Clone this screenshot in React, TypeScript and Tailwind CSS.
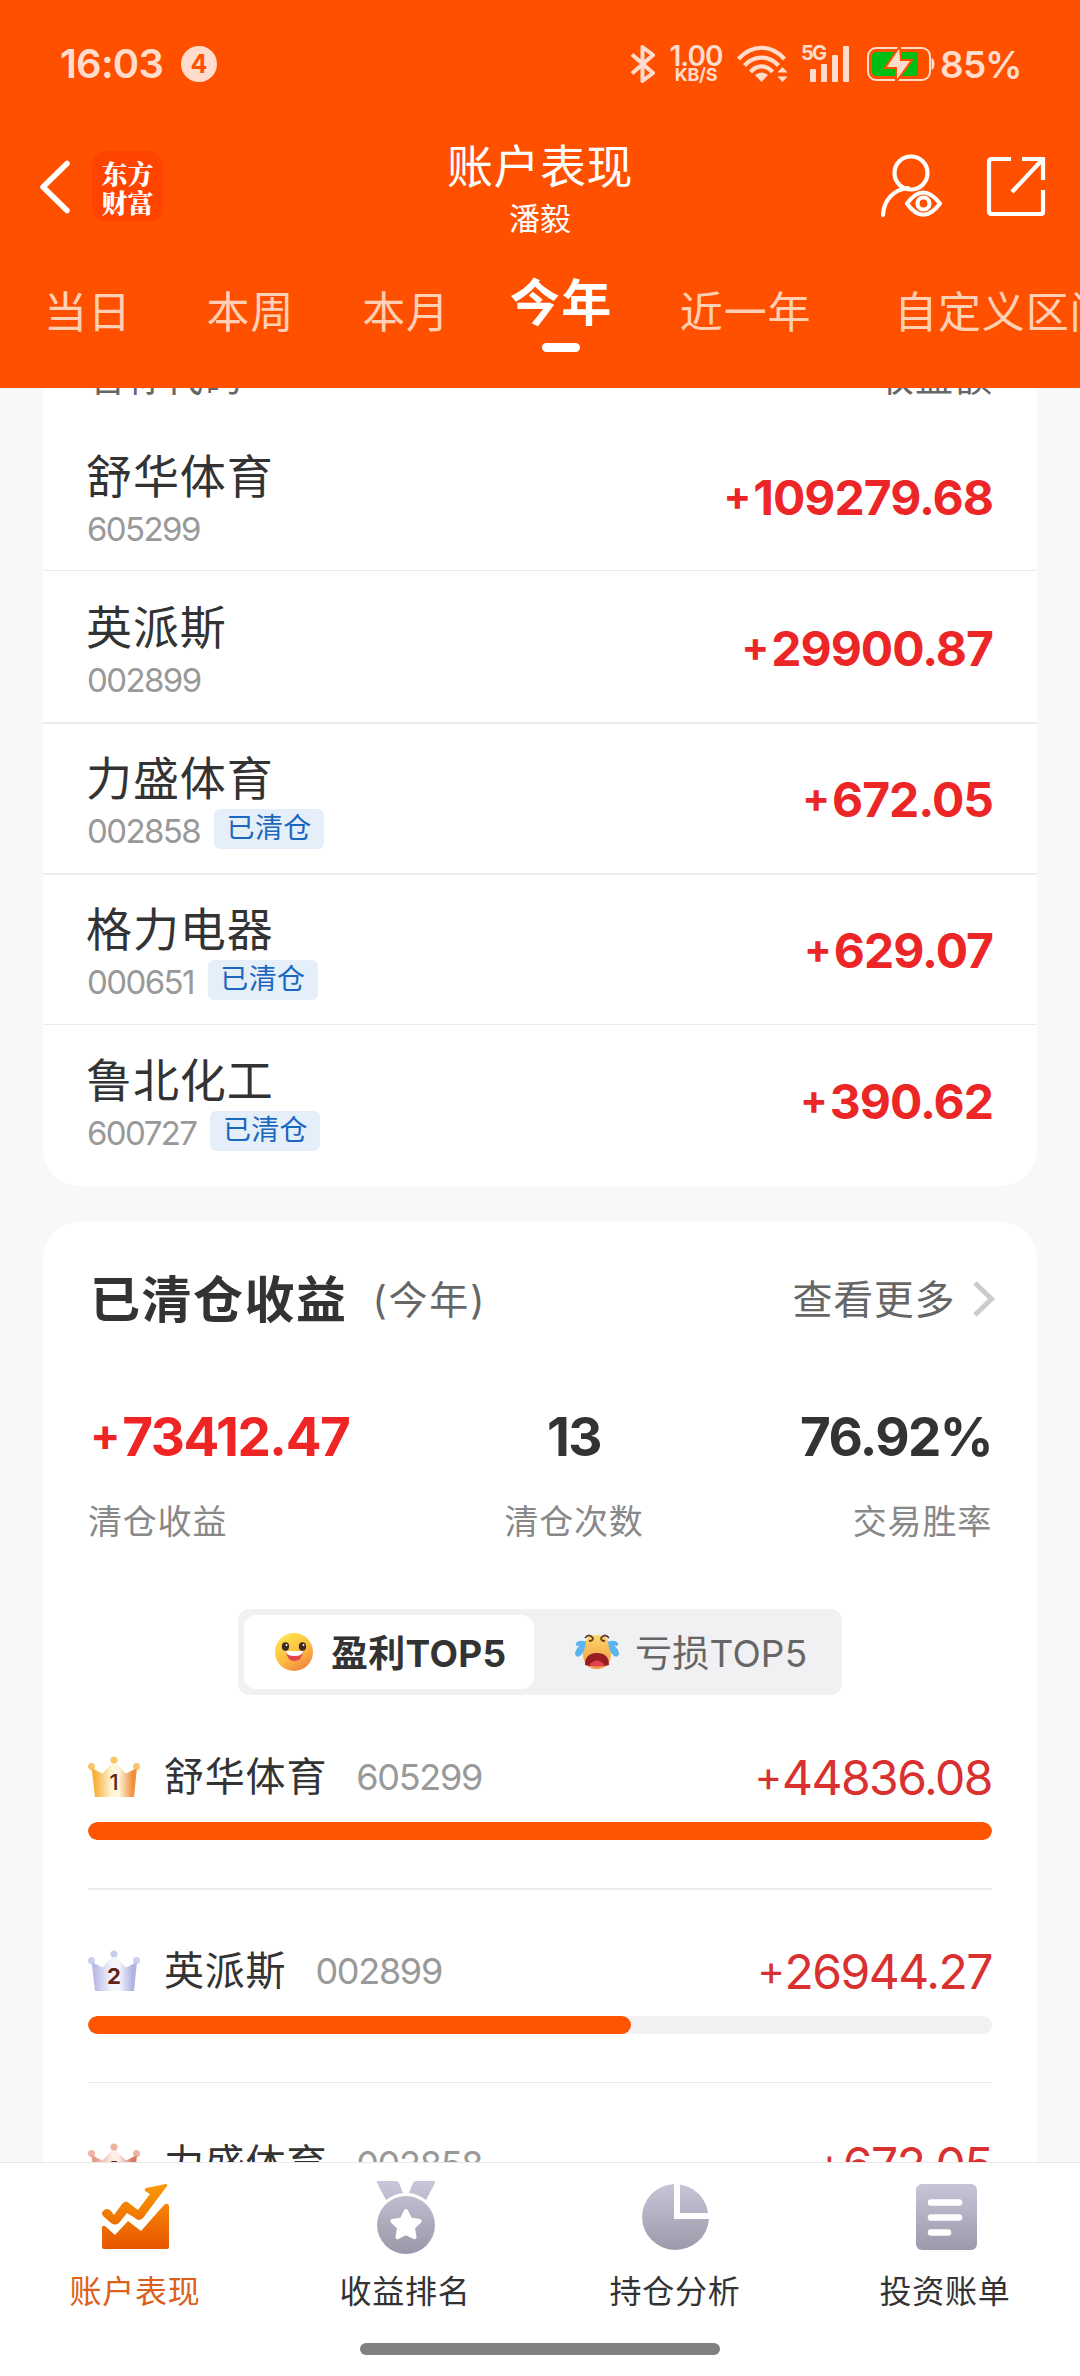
import clsx from 'clsx';

const tabs = [
  { label: '当日', className: 'ml-[44px]' },
  { label: '本周', className: 'ml-[75px]' },
  { label: '本月', className: 'ml-[68px]' },
  { label: '今年', active: true, className: 'ml-[60px]' },
  { label: '近一年', className: 'ml-[67px]' },
  { label: '自定义区间', className: 'ml-[83px]' },
];

const holdings = [
  { name: '舒华体育', code: '605299', amount: '109279.68', cleared: false, row: 'h-[151px] pt-[29px]' },
  { name: '英派斯', code: '002899', amount: '29900.87', cleared: false, row: 'h-[152px] border-t pt-[28px]' },
  { name: '力盛体育', code: '002858', amount: '672.05', cleared: true, row: 'h-[151px] border-t-2 pt-[26px]' },
  { name: '格力电器', code: '000651', amount: '629.07', cleared: true, row: 'h-[151px] border-t-2 pt-[26px]' },
  { name: '鲁北化工', code: '600727', amount: '390.62', cleared: true, row: 'h-[162px] border-t pt-[27px]' },
];

const ranks = [
  { name: '舒华体育', code: '605299', amount: '44836.08', percent: 100, row: 'h-[194px] border-b-2', colors: ['#f7b23c', '#fff6dc', '#f0913c'] },
  { name: '英派斯', code: '002899', amount: '26944.27', percent: 60.1, row: 'h-[193px] border-b', colors: ['#b9bde6', '#f6f6fd', '#b3b3e2'] },
  { name: '力盛体育', code: '002858', amount: '672.05', percent: 1.5, row: 'h-[193px] border-b', colors: ['#e79a84', '#fdeee8', '#d9775f'] },
];

// 状态栏
const StatusBar = () => (
  <div className="flex h-[128px] items-center pl-[60px] text-[#ffdccb]">
    <span className="w-[121px] text-[40px] font-semibold leading-none tracking-[-0.8px]">16:03</span>
    <span className="flex h-9 w-9 items-center justify-center rounded-full bg-[#ffdccb] text-[25px] font-bold leading-none text-[#ff5000]">
      4
    </span>
    <svg className="ml-[413px]" width="26" height="38" viewBox="0 0 26 38" fill="none" stroke="currentColor" strokeWidth="4">
      <path d="M2 9.5 23 28 12.500 36V2L23 10 2 28.500" strokeLinejoin="round" />
    </svg>
    <div className="ml-[12px] flex w-[56px] flex-col items-center leading-none">
      <span className="text-[28px] font-semibold leading-[22px] tracking-[-1px]">1.00</span>
      <span className="text-[18px] font-bold leading-[16px] tracking-[-0.3px]">KB/S</span>
    </div>
    <svg className="ml-[13px]" width="52" height="38" viewBox="0 0 52 38" fill="none" stroke="currentColor" strokeWidth="4.200">
      <path d="M1.500 14C15-1 34-1 47.500 14" />
      <path d="M7.500 20.500C17 10 32 10 41.500 20.500" />
      <path d="M13.500 27C20 19.500 29 19.500 35.500 27" />
      <path d="M18 30q6.500-5 13 0l-6.500 7z" fill="currentColor" stroke="none" />
      <path d="M40.500 27.500 45.500 22l5 5.500zM40.500 31.500l5 5.500 5-5.500z" fill="currentColor" stroke="none" />
    </svg>
    <div className="relative ml-[12px] h-9 w-[49px]">
      <span className="absolute left-0 top-[-1px] text-[20px] font-bold leading-[16px] tracking-[-1.8px]">5G</span>
      <div className="flex h-9 items-end gap-[5px] pl-[9px]">
        <div className="h-[13px] w-[6px] rounded-[1px] bg-current" />
        <div className="h-[18px] w-[6px] rounded-[1px] bg-current" />
        <div className="h-[27px] w-[6px] rounded-[1px] bg-current" />
        <div className="h-9 w-[6px] rounded-[1px] bg-current" />
      </div>
    </div>
    <svg className="ml-[17px]" width="68" height="36" viewBox="0 0 68 36">
      <rect x="1" y="2" width="62" height="32" rx="8" fill="none" stroke="currentColor" strokeWidth="2" />
      <path d="M64.500 12q3 1 3 6t-3 6z" fill="currentColor" />
      <rect x="5" y="6" width="46" height="24" rx="4" fill="#00bd13" />
      <path d="M33 0 18 22h11v14L45 14H34z" fill="currentColor" stroke="#ff5000" strokeWidth="2" />
    </svg>
    <span className="ml-[5px] text-[37px] font-semibold leading-none tracking-[-0.8px]">85%</span>
  </div>
);

const BackIcon = () => (
  <svg width="32" height="56" viewBox="0 0 32 56" fill="none" stroke="white" strokeWidth="5.500" strokeLinecap="round" strokeLinejoin="round">
    <path d="M28 4.500 4 28l24 23.500" />
  </svg>
);

const UserEyeIcon = () => (
  <svg width="64" height="64" viewBox="0 0 64 64" fill="none" stroke="white" strokeWidth="4.200" strokeLinecap="round">
    <circle cx="32" cy="19" r="16.500" />
    <path d="M4 61C4.500 47 14 35.500 29 34" />
    <path d="M28 49.500Q44 27.500 61 49.500 44 72 28 49.500Z" strokeLinejoin="round" />
    <circle cx="44.500" cy="49.500" r="6" />
  </svg>
);

const ShareIcon = () => (
  <svg width="60" height="60" viewBox="0 0 60 60" fill="none" stroke="white" strokeWidth="4.200">
    <path d="M25 3H6Q3 3 3 6v49q0 3 3 3h49q2 0 2-2V34" />
    <path d="M36 3h21v21" />
    <path d="M26 36 56 4" />
  </svg>
);

const Header = () => (
  <header className="h-[388px] shrink-0 overflow-hidden bg-[#ff5000]">
    <StatusBar />
    <div className="grid h-[132px] grid-cols-3">
      <div className="flex items-start pl-[39px]">
        <div className="mt-[31px]">
          <BackIcon />
        </div>
        <div className="ml-[21px] mt-[23px] flex h-[71px] w-[71px] flex-col items-center justify-center rounded-[14px] bg-[#ff4400] font-['Noto_Serif_CJK_SC','Noto_Sans_CJK_SC',serif] text-[26px] font-black leading-[29px] text-white">
          <span>东方</span>
          <span>财富</span>
        </div>
      </div>
      <div className="flex flex-col items-center text-white">
        <h1 className="mt-[10px] text-[46px] leading-[56px] tracking-[0.5px]">账户表现</h1>
        <span className="mt-[5px] text-[31px] leading-[40px]">潘毅</span>
      </div>
      <div className="flex items-start justify-end pr-[34px]">
        <div className="mt-[26px]">
          <UserEyeIcon />
        </div>
        <div className="ml-[43px] mt-[28px]">
          <ShareIcon />
        </div>
      </div>
    </div>
    <nav className="flex w-[1200px] items-start whitespace-nowrap">
      {tabs.map((tab) => (
        <div key={tab.label} className={clsx('flex shrink-0 flex-col items-center', tab.className)}>
          {tab.active ? (
            <>
              <span className="mt-[13px] text-[50px] font-bold leading-[60px] tracking-[1.5px] text-white">{tab.label}</span>
              <span className="mt-[10px] h-[9px] w-[38px] rounded-full bg-white" />
            </>
          ) : (
            <span className="mt-[27px] text-[43px] leading-[50px] tracking-[0.8px] text-[#ffd0b5]">{tab.label}</span>
          )}
        </div>
      ))}
    </nav>
  </header>
);

// 持仓收益列表
const HoldingList = () => (
  <section className="h-[798px] shrink-0 rounded-b-[36px] bg-white">
    <div className="-mt-[36px] mb-[17px] flex h-[50px] items-center justify-between px-[44px] text-[38px] tracking-[1px] text-[#666]">
      <span>名称代码</span>
      <span>收益额</span>
    </div>
    {holdings.map((item) => (
      <div key={item.code} className={clsx('flex items-start justify-between border-[#ececee] px-[44px]', item.row)}>
        <div className="flex flex-col">
          <span className="-ml-px text-[46px] leading-[56px] tracking-[0.9px] text-[#333]">{item.name}</span>
          <div className="flex h-[50px] items-center text-[33px] leading-none tracking-[-1.6px] text-[#999]">
            {item.code}
            {item.cleared && (
              <span className="mb-[4px] ml-[14px] flex h-10 w-[110px] items-center justify-center rounded-md bg-[#e5effa] pb-[3px] text-[28px] tracking-[0.3px] text-[#1b67c0]">
                已清仓
              </span>
            )}
          </div>
        </div>
        <div className="flex h-[100px] items-center text-[48px] font-bold tracking-[-1px] text-[#ec2626]">
          <span className="mb-[5px] mr-[3px] text-[41px]">+</span>
          {item.amount}
        </div>
      </div>
    ))}
  </section>
);

const HappyFace = () => (
  <svg width="40" height="46" viewBox="0 0 40 46">
    <defs>
      <linearGradient id="happy" x1="0.200" y1="0" x2="0.800" y2="1">
        <stop offset="0" stopColor="#ffe64f" />
        <stop offset="0.550" stopColor="#fbbd3e" />
        <stop offset="1" stopColor="#f07d45" />
      </linearGradient>
    </defs>
    <g transform="translate(0 3)">
      <circle cx="20" cy="20" r="19" fill="url(#happy)" />
      <ellipse cx="11.500" cy="14.500" rx="3.600" ry="4.200" fill="#3a2a20" />
      <ellipse cx="28.500" cy="14.500" rx="3.600" ry="4.200" fill="#3a2a20" />
      <circle cx="12.500" cy="13" r="1" fill="#fff" />
      <circle cx="29.500" cy="13" r="1" fill="#fff" />
      <path d="M12 19h17q-1 10-8.500 10T12 19z" fill="#e2484b" />
      <path d="M12 19h17q0 5-8.500 5T12 19z" fill="#fff" />
    </g>
  </svg>
);

const CryFace = () => (
  <svg width="44" height="36" viewBox="0 0 44 36">
    <defs>
      <linearGradient id="cry" x1="0" y1="0" x2="0" y2="1">
        <stop offset="0" stopColor="#fbd667" />
        <stop offset="1" stopColor="#f39a45" />
      </linearGradient>
    </defs>
    <path d="M22 1C31 1 35 7 35.500 15c2 10-2 20-13.500 20S6.500 25 8.500 15C9 7 13 1 22 1z" fill="url(#cry)" />
    <path
      d="M9 7Q3 6 1 9q-1 2 1 3 2 0 3-1-5 5-5 9 1 4 5 2 5-4 6-14-1-1-2-1zM35 7q6-1 8 2 1 2-1 3-2 0-3-1 5 5 5 9-1 4-5 2-5-4-6-14 1-1 2-1z"
      fill="#5cb4ee"
    />
    <path d="M10 4q4-5 8 0 0 3-4 3M34 4q-4-5-8 0 0 3 4 3" fill="none" stroke="#6a4028" strokeWidth="1.800" />
    <path d="M10 31q0-12 12-12t12 12q-6 2-12 0-6 2-12 0z" fill="#971c22" />
    <path d="M14 31q8-9 16 0-8 3-16 0z" fill="#e2404c" />
  </svg>
);

const Crown = ({ rank, colors }: { rank: number; colors: string[] }) => (
  <svg width="52" height="41" viewBox="0 0 52 41">
    <defs>
      <linearGradient id={`crown${rank}`} x1="0" y1="0" x2="1" y2="0">
        <stop offset="0.080" stopColor={colors[0]} />
        <stop offset="0.450" stopColor={colors[1]} />
        <stop offset="0.600" stopColor={colors[1]} />
        <stop offset="0.900" stopColor={colors[2]} />
      </linearGradient>
    </defs>
    <path d="M3.500 12 14.500 17.500 26 5 38 17.500 49 12 46 41H7z" fill={`url(#crown${rank})`} />
    <g fill={colors[0]} fillOpacity="0.750">
      <circle cx="3.500" cy="10.500" r="3.500" />
      <circle cx="26" cy="4" r="3.600" />
      <circle cx="48.500" cy="10.500" r="3.500" />
    </g>
    <text x="26" y="34" textAnchor="middle" fontSize="22" fontWeight={rank === 1 ? 500 : 700} fill="#5e2418">
      {rank}
    </text>
  </svg>
);

// 已清仓收益
const ClearedCard = () => (
  <section className="mt-[36px] h-[1100px] shrink-0 rounded-[36px] bg-white px-[45px]">
    <div className="flex h-[156px] items-center">
      <h2 className="ml-[2px] text-[50px] font-bold tracking-[1.5px] text-[#333]">已清仓收益</h2>
      <span className="ml-[25px] text-[39px] tracking-[1.8px] text-[#666]">(今年)</span>
      <span className="ml-auto text-[40px] tracking-[0.6px] text-[#666]">查看更多</span>
      <svg className="-mr-[4px] ml-[17px]" width="24" height="38" viewBox="0 0 24 38" fill="none" stroke="#ccc" strokeWidth="5">
        <path d="M3 2 19.500 18 3 34" />
      </svg>
    </div>
    <div className="grid h-[231px] grid-cols-3 pt-[28px] leading-none">
      <div>
        <div className="flex h-[62px] items-center pl-[2px] text-[53px] font-bold tracking-[-1.4px] text-[#ef2525]">
          <span className="mb-[5px] mr-[3px] text-[45px]">+</span>73412.47
        </div>
        <div className="mt-[34px] text-[34px] leading-[40px] tracking-[0.8px] text-[#888]">清仓收益</div>
      </div>
      <div className="pl-[68px] text-center">
        <div className="h-[62px] text-[53px] font-bold leading-[62px] tracking-[-1.5px] text-[#333]">13</div>
        <div className="mt-[34px] text-[34px] leading-[40px] tracking-[0.8px] text-[#888]">清仓次数</div>
      </div>
      <div className="text-right">
        <div className="h-[62px] text-[53px] font-bold leading-[62px] tracking-[-1.6px] text-[#333]">76.92%</div>
        <div className="mt-[34px] text-[34px] leading-[40px] tracking-[0.8px] text-[#888]">交易胜率</div>
      </div>
    </div>
    <div className="mx-auto flex h-[86px] w-[604px] items-center rounded-xl bg-[#f1f1f4] p-[6px] text-[37px]">
      <div className="flex h-[74px] w-[290px] items-center rounded-xl bg-white pl-[30px] font-bold text-[#333]">
        <HappyFace />
        <span className="ml-[17px] mt-[3px] tracking-[0.3px]">盈利TOP5</span>
      </div>
      <div className="flex items-center pl-[41px] text-[#666]">
        <CryFace />
        <span className="ml-[16px] mt-[3px] tracking-[0.2px]">亏损TOP5</span>
      </div>
    </div>
    <div className="mt-px">
      {ranks.map((item, i) => (
        <div key={item.code} className={clsx('border-[#ececee]', item.row)}>
          <div className="flex h-[126px] items-end">
            <div className="flex h-[90px] w-full items-center">
              <div className="mt-[-2px]">
                <Crown rank={i + 1} colors={item.colors} />
              </div>
              <span className="ml-[24px] text-[40px] tracking-[0.8px] text-[#333]">{item.name}</span>
              <span className="ml-[29px] text-[36px] tracking-[-1.3px] text-[#999]">{item.code}</span>
              <span className="ml-auto flex items-center pt-[2px] text-[48px] tracking-[-1.5px] text-[#d93030]">
                <span className="mb-[5px] mr-px text-[42px]">+</span>
                {item.amount}
              </span>
            </div>
          </div>
          <div className="h-[18px] overflow-hidden rounded-full bg-[#f1f1f4]">
            <div className="h-full rounded-full bg-[#ff5500]" style={{ width: `${item.percent}%` }} />
          </div>
        </div>
      ))}
    </div>
  </section>
);

const GrayGradient = ({ id }: { id: string }) => (
  <defs>
    <linearGradient id={id} x1="0" y1="0" x2="0" y2="72" gradientUnits="userSpaceOnUse">
      <stop offset="0" stopColor="#c9c8db" />
      <stop offset="1" stopColor="#9a99a9" />
    </linearGradient>
  </defs>
);

const ChartIcon = () => (
  <svg width="72" height="76" viewBox="0 0 72 76">
    <defs>
      <linearGradient id="chart" x1="0" y1="0" x2="0" y2="1">
        <stop offset="0" stopColor="#f99a05" />
        <stop offset="1" stopColor="#e85500" />
      </linearGradient>
    </defs>
    <g transform="translate(3 4)">
      <path
        d="M1 27q4-4 8 0l3 4 8-11q4-5 8 0l8 6L48 10l-5-3q-1-2 1-3L64 0q2 0 1 2L41 34q-4 4-8 0l-8-5-8 10q-4 3-8 0L1 32q-2-3 0-5zM0 43q1-2 3-1l10 9 13-14 13 10 23-26q4-3 5 1v41q0 2-2 2H2q-2 0-2-2z"
        fill="url(#chart)"
      />
    </g>
  </svg>
);

const MedalIcon = () => (
  <svg width="72" height="76" viewBox="0 0 72 76">
    <GrayGradient id="medal" />
    <g fill="url(#medal)">
      <path d="M9 1h18q2 0 3 2l4 10q-9 1-17 7L8 3Q7 1 9 1zM65 1H47q-2 0-3 2l-4 10q9 1 17 7l9-17q1-2-1-2z" />
      <circle cx="37" cy="45" r="29" />
    </g>
    <path
      d="M37 31l4.300 8.500 9.400 1.500-6.700 6.700 1.500 9.500-8.500-4.300-8.500 4.300 1.500-9.500-6.700-6.700 9.400-1.500z"
      fill="#fff"
      stroke="#fff"
      strokeWidth="4"
      strokeLinejoin="round"
    />
  </svg>
);

const PieIcon = () => (
  <svg width="72" height="76" viewBox="0 0 72 76">
    <GrayGradient id="pie" />
    <path d="M35 4v35h35A33.500 33 0 1 1 35 4zM41 4.500A33 33 0 0 1 69 33H41z" fill="url(#pie)" />
  </svg>
);

const BillIcon = () => (
  <svg width="72" height="76" viewBox="0 0 72 76">
    <GrayGradient id="bill" />
    <rect x="7" y="4" width="61" height="66" rx="6" fill="url(#bill)" />
    <path d="M22 22.500h28M22 37.500h28M22 52.500h17" stroke="#fff" strokeWidth="6.500" strokeLinecap="round" />
  </svg>
);

const navItems = [
  { label: '账户表现', icon: <ChartIcon />, active: true },
  { label: '收益排名', icon: <MedalIcon /> },
  { label: '持仓分析', icon: <PieIcon /> },
  { label: '投资账单', icon: <BillIcon /> },
];

const BottomNav = () => (
  <footer className="flex h-[214px] shrink-0 flex-col items-center border-t border-[#e8e8ea] bg-white">
    <div className="grid w-full grid-cols-4 pt-[17px]">
      {navItems.map((item) => (
        <div key={item.label} className="flex flex-col items-center">
          {item.icon}
          <span className={clsx('mt-[14px] text-[32px] leading-[44px] tracking-[0.8px]', item.active ? 'text-[#dc5f1c]' : 'text-[#333]')}>
            {item.label}
          </span>
        </div>
      ))}
    </div>
    <div className="mt-[29px] h-3 w-[360px] rounded-full bg-[#808080]" />
  </footer>
);

const App = () => (
  <div className="flex h-[2376px] w-[1080px] flex-col overflow-hidden bg-[#f6f8fa] font-['Inter','Noto_Sans_CJK_SC',sans-serif]">
    <Header />
    <main className="flex min-h-0 flex-1 flex-col overflow-hidden px-[43px]">
      <HoldingList />
      <ClearedCard />
    </main>
    <BottomNav />
  </div>
);

export default App;
